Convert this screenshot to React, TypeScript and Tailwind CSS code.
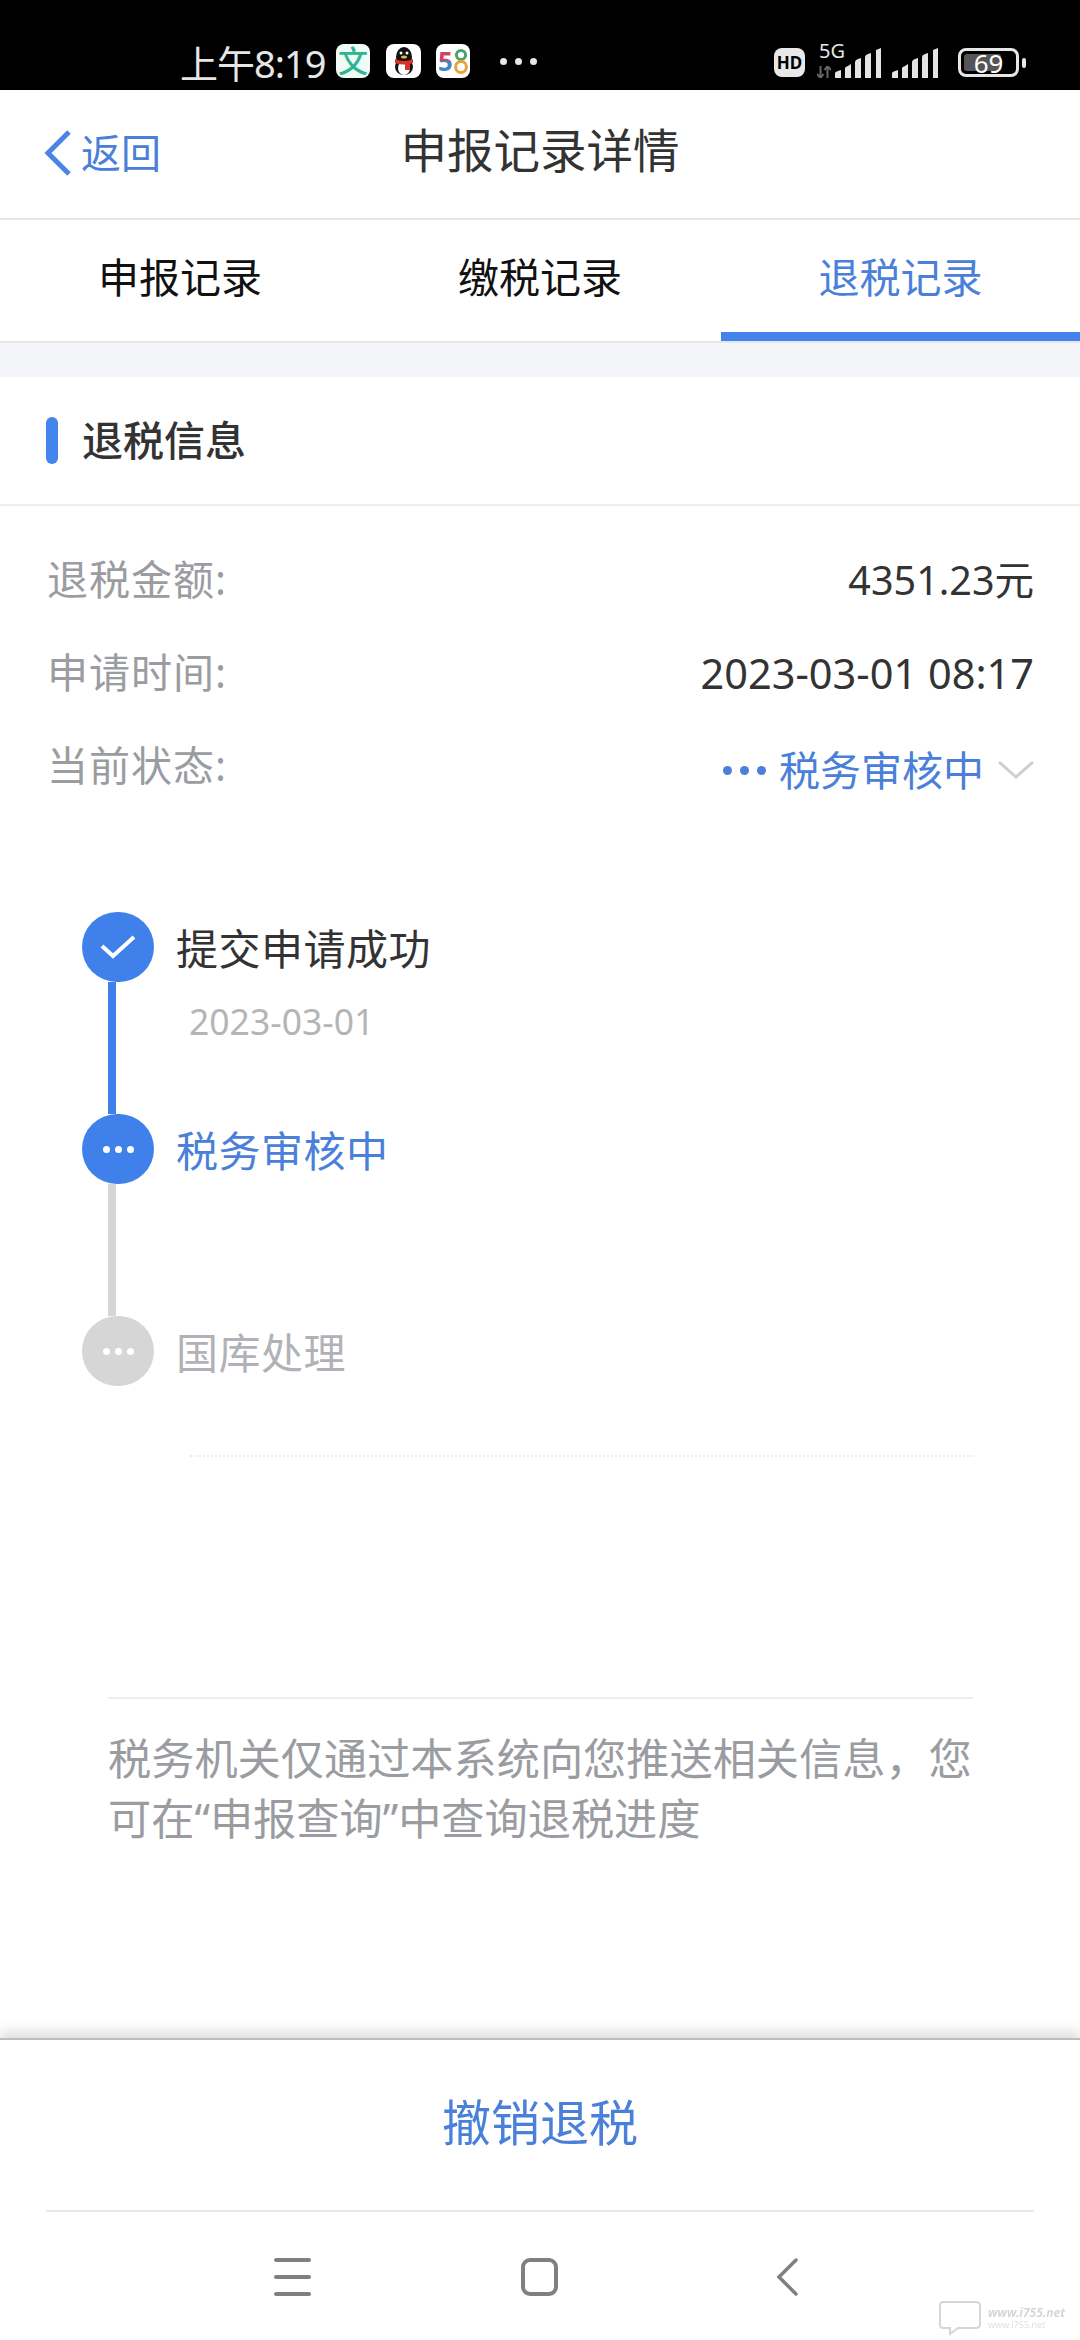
import { ReactNode } from "react";

const FONT = "font-['Noto_Sans','Noto_Sans_CJK_SC',sans-serif]";

const Bars = () => (
  <svg width="47" height="30" viewBox="0 0 47 30" className="shrink-0">
    <g fill="#e4e4e4">
      <path d="M0 25 Q0 24 3 23 L6 22 V30 H0Z" />
      <path d="M10 20 Q10 19 13 18 L16 16 V30 H10Z" />
      <path d="M20 14 Q20 12 23 11 L26 10 V30 H20Z" />
      <path d="M30 9 Q30 7 33 6 L36 5 V30 H30Z" />
      <path d="M41 2 L46 0 V30 H41Z" />
    </g>
  </svg>
);

const StatusBar = () => (
  <div className="h-[90px] bg-black flex items-start pl-[180px] pt-[44px] text-[#e6e6e6]">
    <span className="text-[38px] leading-[38px] w-[156px] whitespace-nowrap tracking-[-1px]">上午8:19</span>
    <div className="w-[34px] h-[34px] rounded-[8px] bg-[#f0fbf7] flex items-center justify-center text-[#2db592] text-[30px] leading-none font-medium">
      文
    </div>
    <div className="w-[35px] h-[34px] rounded-[8px] bg-white ml-[16px] flex items-center justify-center">
      <svg width="26" height="30" viewBox="0 0 26 30">
        <ellipse cx="13" cy="11" rx="8" ry="10" fill="#111" />
        <ellipse cx="13" cy="21" rx="9" ry="8" fill="#111" />
        <ellipse cx="13" cy="22" rx="6" ry="7" fill="#fff" />
        <path d="M4 13 Q13 17 22 13 L22 17 Q13 20 4 17Z" fill="#d8322c" />
        <rect x="14" y="16" width="5" height="8" fill="#d8322c" />
        <circle cx="10" cy="7" r="1.5" fill="#fff" />
        <circle cx="16" cy="7" r="1.5" fill="#fff" />
        <ellipse cx="13" cy="11" rx="3" ry="1.5" fill="#f2b233" />
      </svg>
    </div>
    <div className="w-[34px] h-[34px] rounded-[8px] bg-white ml-[15px] flex items-center justify-center gap-[1px]">
      <span className="text-[26px] leading-none font-bold bg-[linear-gradient(#d0455c_50%,#3d86c6_50%)] bg-clip-text text-transparent">5</span>
      <svg width="14" height="28" viewBox="0 0 14 28">
        <circle cx="7" cy="8" r="4.6" fill="none" stroke="#4aa36c" strokeWidth="3" />
        <circle cx="7" cy="20" r="5.4" fill="none" stroke="#eaa23c" strokeWidth="3" />
      </svg>
    </div>
    <div className="flex gap-[8px] ml-[30px] mt-[14px]">
      <span className="w-[7px] h-[7px] rounded-full bg-[#e6e6e6]" />
      <span className="w-[7px] h-[7px] rounded-full bg-[#e6e6e6]" />
      <span className="w-[7px] h-[7px] rounded-full bg-[#e6e6e6]" />
    </div>

    <div className="ml-[237px] w-[31px] h-[29px] mt-[4px] rounded-[8px] bg-[#e8e8e8] text-black text-[17px] leading-none font-bold flex items-center justify-center">
      HD
    </div>
    <div className="relative w-[47px] h-[30px] mt-[4px] ml-[30px] shrink-0">
      <Bars />
      <span className="absolute left-[-16px] top-[-7px] text-[20px] leading-[20px]">5G</span>
      <svg width="14" height="12" viewBox="0 0 14 12" className="absolute left-[-18px] top-[18px]">
        <path d="M3.5 0 V12 M0 8 L3.5 12 L6.5 8 M10.5 12 V0 M7.5 4 L10.5 0 L14 4" fill="none" stroke="#666" strokeWidth="2" />
      </svg>
    </div>
    <div className="w-[46px] h-[30px] mt-[4px] ml-[10px]">
      <Bars />
    </div>
    <div className="ml-[20px] w-[61px] h-[29px] mt-[4px] rounded-[8px] border-[3px] border-[#e6e6e6] p-[3px] relative">
      <div className="w-[37px] h-full rounded-[3px] bg-[#555]" />
      <span className="absolute inset-0 flex items-center justify-center text-[26px] leading-none text-white">69</span>
    </div>
    <div className="w-[4px] h-[10px] ml-[3px] mt-[14px] rounded-full bg-[#e6e6e6]" />
  </div>
);

const Header = () => (
  <div className="h-[130px] border-b-2 border-[#e6e6e6] flex items-center justify-between bg-white">
    <div className="w-[280px] flex items-center pl-[44px] text-[#4a80d9] text-[40px] leading-none pb-[2px]">
      <svg width="28" height="48" viewBox="0 0 28 48" className="mr-[9px]">
        <path d="M25 3 L4 24 L25 45" fill="none" stroke="#4a85e6" strokeWidth="5" />
      </svg>
      返回
    </div>
    <div className="text-[46.5px] leading-none text-[#333] pb-[8px]">申报记录详情</div>
    <div className="w-[280px]" />
  </div>
);

const Tabs = () => (
  <div className="h-[123px] border-b-2 border-[#e6e6e6] grid grid-cols-3 bg-white">
    <div className="flex items-center justify-center text-[41px] leading-none text-[#111] pt-[3px] border-b-[9px] border-transparent">申报记录</div>
    <div className="flex items-center justify-center text-[41px] leading-none text-[#111] pt-[3px] border-b-[9px] border-transparent">缴税记录</div>
    <div className="flex items-center justify-center text-[41px] leading-none text-[#4a80d9] pt-[3px] ml-[1px] border-b-[9px] border-[#4282ea]">退税记录</div>
  </div>
);

const InfoRow = ({ label, children }: { label: string; children: ReactNode }) => (
  <div className="h-[93px] flex justify-between items-start pl-[47px] pr-[46px]">
    <span className="text-[41px] leading-[46px] text-[#9a9ca1] tracking-[1px] whitespace-nowrap">{label}</span>
    {children}
  </div>
);

const Step = ({
  state,
  title,
  date,
  last,
}: {
  state: "done" | "active" | "todo";
  title: string;
  date?: string;
  last?: boolean;
}) => {
  const circle = state === "todo" ? "bg-[#d6d6d6]" : "bg-[#3f80ea]";
  const text = state === "done" ? "text-[#333]" : state === "active" ? "text-[#4a80d9]" : "text-[#b0b2b8]";
  return (
    <div className={last ? "flex h-[70px]" : "flex h-[202px]"}>
      <div className="w-[72px] shrink-0 flex flex-col">
        <div className={`w-[72px] h-[70px] rounded-full flex items-center justify-center gap-[5px] shrink-0 ${circle}`}>
          {state === "done" ? (
            <svg width="38" height="28" viewBox="0 0 38 28">
              <path d="M3 13 L14 23 L35 4" fill="none" stroke="#fff" strokeWidth="4" />
            </svg>
          ) : (
            <>
              <span className="w-[7px] h-[7px] rounded-full bg-white" />
              <span className="w-[7px] h-[7px] rounded-full bg-white" />
              <span className="w-[7px] h-[7px] rounded-full bg-white" />
            </>
          )}
        </div>
        {!last && (
          <div className={state === "done" ? "w-[8px] flex-1 ml-[26px] bg-[#3f80ea]" : "w-[8px] flex-1 ml-[26px] bg-[#d6d6d6]"} />
        )}
      </div>
      <div className="ml-[22px] pt-[2px]">
        <div className={`text-[42px] leading-[70px] tracking-[0.5px] ${text}`}>{title}</div>
        {date && <div className="text-[35.5px] leading-[40px] text-[#b5b5b5] ml-[13px] mt-[17px]">{date}</div>}
      </div>
    </div>
  );
};

const Watermark = () => (
  <div className="absolute left-[938px] top-[2300px] flex items-center gap-[4px] opacity-60">
    <svg width="46" height="36" viewBox="0 0 46 36">
      <path d="M5 2 H38 Q42 2 42 6 V24 Q42 28 38 28 H20 L12 34 V28 H5 Q2 28 2 24 V6 Q2 2 5 2Z" fill="#fff" stroke="#bbb" strokeWidth="2" />
    </svg>
    <div className="flex flex-col">
      <span className="text-[12px] leading-[14px] italic font-bold text-[#bbb] whitespace-nowrap">www.i755.net</span>
      <span className="text-[9px] leading-[10px] text-[#ccc] whitespace-nowrap">www.i755.net</span>
    </div>
  </div>
);

export default function App() {
  return (
    <div className={`relative w-[1080px] h-[2340px] bg-white flex flex-col overflow-hidden ${FONT}`}>
      <StatusBar />
      <Header />
      <Tabs />
      <div className="h-[34px] bg-[#f3f5f9]" />

      <div className="h-[129px] border-b-2 border-[#efefef] flex items-center pl-[46px]">
        <div className="w-[12px] h-[47px] rounded-full bg-[#4285ec] mr-[24px]" />
        <span className="text-[41px] leading-none font-medium text-[#333]">退税信息</span>
      </div>

      <div className="pt-[50px]">
        <InfoRow label="退税金额:">
          <span className="text-[39.5px] leading-[48px] text-[#333] whitespace-nowrap">4351.23元</span>
        </InfoRow>
        <InfoRow label="申请时间:">
          <span className="text-[41.5px] leading-[48px] text-[#333] whitespace-nowrap">2023-03-01 08:17</span>
        </InfoRow>
        <InfoRow label="当前状态:">
          <div className="flex items-center mt-[3px]">
            <span className="w-[9px] h-[9px] rounded-full bg-[#4a80d9]" />
            <span className="w-[9px] h-[9px] rounded-full bg-[#4a80d9] ml-[8px]" />
            <span className="w-[9px] h-[9px] rounded-full bg-[#4a80d9] ml-[8px]" />
            <span className="text-[41px] leading-[50px] text-[#4a80d9] ml-[13px]">税务审核中</span>
            <svg width="36" height="20" viewBox="0 0 36 20" className="ml-[14px]">
              <path d="M1 2 L18 17 L35 2" fill="none" stroke="#cfcfcf" strokeWidth="3" />
            </svg>
          </div>
        </InfoRow>
      </div>

      <div className="pl-[82px] mt-[77px]">
        <Step state="done" title="提交申请成功" date="2023-03-01" />
        <Step state="active" title="税务审核中" />
        <Step state="todo" title="国库处理" last />
      </div>

      <div className="mt-[69px] ml-[190px] w-[783px] border-t-2 border-dotted border-[#ececec]" />
      <div className="mt-[240px] ml-[108px] w-[865px] border-t-2 border-[#eeeeee]" />
      <p className="ml-[108px] w-[872px] mt-[30px] text-[43.2px] leading-[60px] text-[#9a9ca1]">
        税务机关仅通过本系统向您推送相关信息，您可在“申报查询”中查询退税进度
      </p>

      <div className="mt-auto h-[302px] border-t-2 border-[#bdbdbd] shadow-[0_-6px_12px_rgba(0,0,0,0.14)] bg-white flex flex-col">
        <div className="h-[170px] flex items-center justify-center text-[49px] leading-none text-[#4a80d9] pb-[6px]">撤销退税</div>
        <div className="mx-[46px] border-t-2 border-[#e8e8e8]" />
        <div className="flex-1 relative flex items-start pt-[46px] pl-[274px]">
          <div className="w-[37px] h-[38px] flex flex-col justify-between">
            <div className="h-[4px] rounded-full bg-[#808080]" />
            <div className="h-[4px] rounded-full bg-[#808080]" />
            <div className="h-[4px] rounded-full bg-[#808080]" />
          </div>
          <div className="w-[37px] h-[38px] ml-[210px] rounded-[9px] border-[4px] border-[#808080]" />
          <svg width="22" height="38" viewBox="0 0 22 38" className="ml-[218px]">
            <path d="M20 2 L3 19 L20 36" fill="none" stroke="#808080" strokeWidth="3.5" strokeLinecap="round" />
          </svg>
        </div>
      </div>
      <Watermark />
    </div>
  );
}
